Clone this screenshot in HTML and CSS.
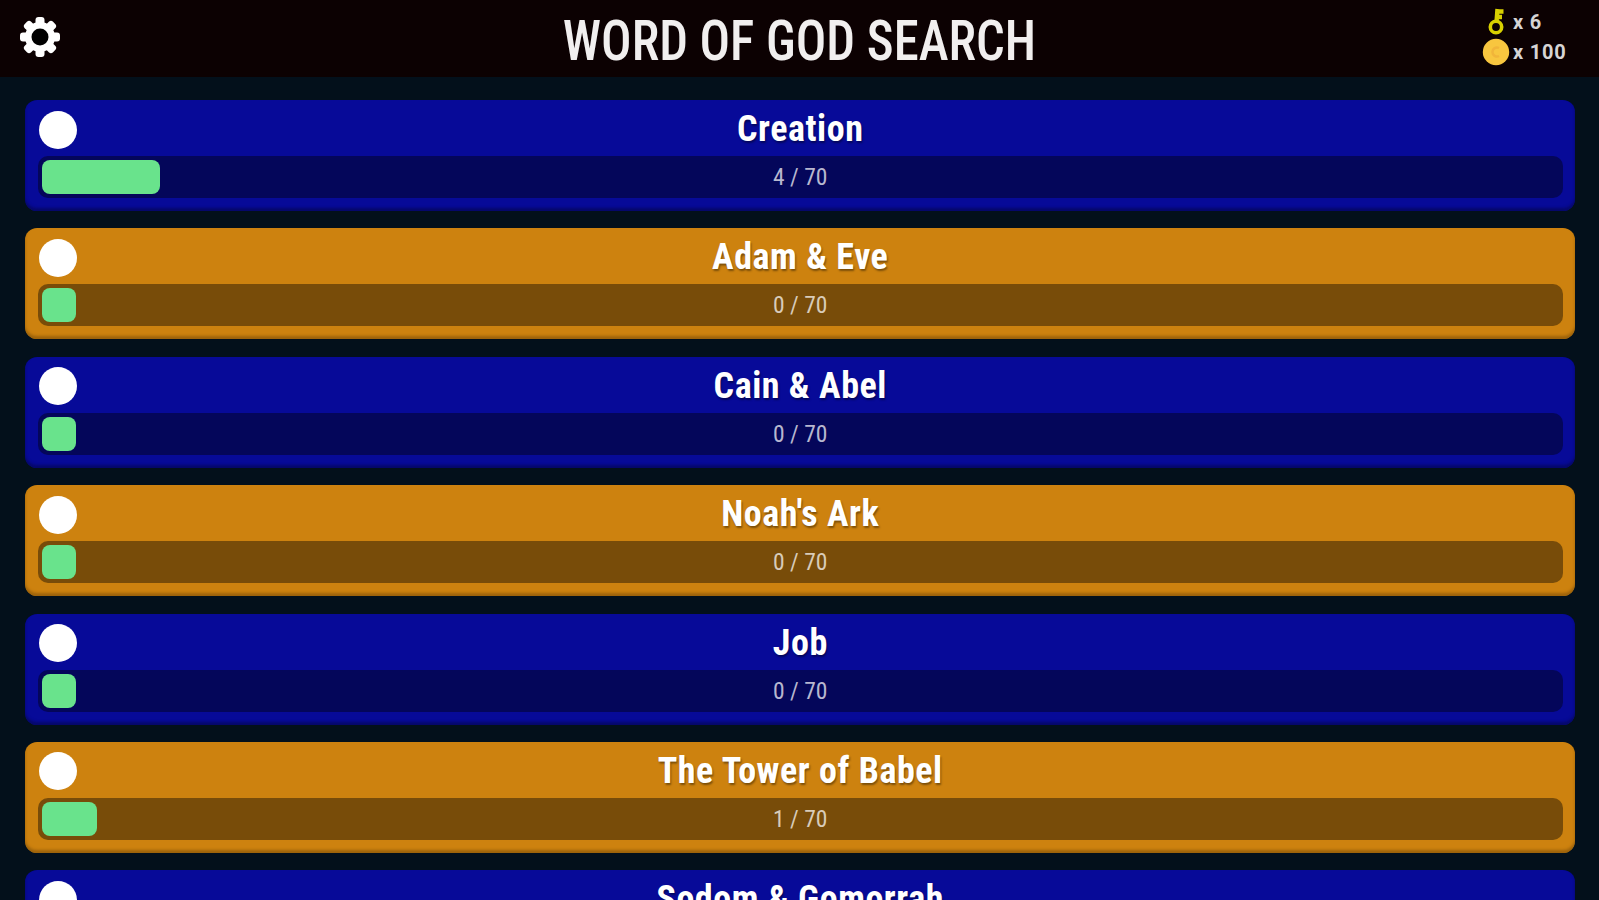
FILE: index.html
```html
<!DOCTYPE html>
<html lang="en">
<head>
    <meta charset="utf-8">
    <meta name="viewport" content="width=device-width, initial-scale=1.0">
    <title>Word of God Search</title>
    <link rel="stylesheet" href="styles.css">
</head>
<body>
    <header class="header">
        <svg class="gear" viewBox="-20 -20 40 40">
            <g fill="#fff">
                <rect x="-4.5" y="-20" width="9" height="40" rx="3"/>
                <rect x="-4.5" y="-20" width="9" height="40" rx="3" transform="rotate(45)"/>
                <rect x="-4.5" y="-20" width="9" height="40" rx="3" transform="rotate(90)"/>
                <rect x="-4.5" y="-20" width="9" height="40" rx="3" transform="rotate(135)"/>
                <circle r="15"/>
            </g>
            <circle r="8.5" fill="#000"/>
        </svg>
        <h1 class="title"><span>WORD OF GOD SEARCH</span></h1>
        <div class="wallet">
            <div class="wallet-row">
                <svg class="key" viewBox="0 0 18 28">
                    <circle cx="8" cy="19" r="5.7" fill="none" stroke="#d8d000" stroke-width="3.6"/>
                    <path d="M8.5 14L9.5 1M9.5 3.5h6M9 9h5" fill="none" stroke="#d8d000" stroke-width="4.4"/>
                </svg>
                <span class="amount">x 6</span>
            </div>
            <div class="wallet-row">
                <svg class="coin" viewBox="0 0 28 28">
                    <circle cx="14" cy="14" r="13.2" fill="#f8c63f"/>
                    <path d="M17 10a4.5 4.5 0 1 0 0 8" fill="none" stroke="#f1b53a" stroke-width="2.5"/>
                </svg>
                <span class="amount">x 100</span>
            </div>
        </div>
    </header>
    <main class="levels">
        <div class="level blue">
            <div class="level-top"><i class="dot"></i><h2>Creation</h2></div>
            <div class="track"><div class="fill" style="width: 118.5px"></div><span class="count">4 / 70</span></div>
        </div>
        <div class="level orange">
            <div class="level-top"><i class="dot"></i><h2>Adam &amp; Eve</h2></div>
            <div class="track"><div class="fill"></div><span class="count">0 / 70</span></div>
        </div>
        <div class="level blue">
            <div class="level-top"><i class="dot"></i><h2>Cain &amp; Abel</h2></div>
            <div class="track"><div class="fill"></div><span class="count">0 / 70</span></div>
        </div>
        <div class="level orange">
            <div class="level-top"><i class="dot"></i><h2>Noah's Ark</h2></div>
            <div class="track"><div class="fill"></div><span class="count">0 / 70</span></div>
        </div>
        <div class="level blue">
            <div class="level-top"><i class="dot"></i><h2>Job</h2></div>
            <div class="track"><div class="fill"></div><span class="count">0 / 70</span></div>
        </div>
        <div class="level orange">
            <div class="level-top"><i class="dot"></i><h2>The Tower of Babel</h2></div>
            <div class="track"><div class="fill" style="width: 55px"></div><span class="count">1 / 70</span></div>
        </div>
        <div class="level blue">
            <div class="level-top"><i class="dot"></i><h2>Sodom &amp; Gomorrah</h2></div>
        </div>
    </main>
</body>
</html>
```

FILE: styles.css
```css
* {
    box-sizing: border-box;
    margin: 0;
    padding: 0;
}

body {
    height: 100vh;
    overflow: hidden;
    background-color: #03101b;
    color: #fff;
    font-family: "Roboto Condensed", Roboto, sans-serif;
    font-stretch: 75%;
}

.header {
    display: grid;
    grid-template-columns: 140px 1fr 140px;
    height: 76.5px;
    background-color: #0c0102;
}

.gear {
    width: 40px;
    height: 40px;
    margin: 17px 0 0 20px;
}

.title {
    padding-top: 8px;
    font-size: 56px;
    font-weight: 500;
    line-height: 66px;
    text-align: center;
    white-space: nowrap;
    color: #f1efef;
}

.title span {
    display: inline-block;
    transform: scaleX(0.905);
}

.wallet {
    padding: 7px 0 0 23px;
}

.wallet-row {
    display: flex;
    align-items: center;
    height: 30px;
}

.key {
    width: 18px;
    height: 28px;
    margin: 0 7px 0 6px;
}

.coin {
    width: 28px;
    height: 28px;
    margin-right: 3px;
}

.amount {
    font-family: Roboto, sans-serif;
    font-size: 20px;
    font-weight: 700;
    font-stretch: 100%;
    letter-spacing: 0.8px;
    line-height: 28px;
    color: #d6d4d4;
    white-space: nowrap;
}

.levels {
    display: flex;
    flex-direction: column;
    gap: 17.4px;
    padding: 23.5px 24.5px 0 25px;
}

.level {
    flex: none;
    height: 111px;
    padding: 10px 12px 0 13px;
    border-radius: 12px;
}

.blue {
    background-color: #070a98;
    box-shadow: inset 0 -3px 3px #06086a;
}

.orange {
    background-color: #cd820f;
    box-shadow: inset 0 -3px 3px #9c620b;
}

.level-top {
    display: grid;
    grid-template-columns: 39px 1fr 39px;
    height: 46px;
}

.dot {
    width: 38px;
    height: 38px;
    margin: 0.5px 0 0 0.5px;
    border-radius: 50%;
    background-color: #fff;
}

.level h2 {
    font-size: 36px;
    font-weight: 700;
    letter-spacing: 0.55px;
    line-height: 38px;
    text-align: center;
    text-shadow: 1px 2px 2px rgba(0, 0, 0, 0.4);
}

.track {
    display: grid;
    align-items: center;
    height: 42px;
    border-radius: 10px;
}

.blue .track {
    background-color: #04065a;
}

.orange .track {
    background-color: #784c09;
}

.fill {
    grid-area: 1 / 1;
    width: 34px;
    height: 34px;
    margin-left: 3.5px;
    border-radius: 8px;
    background-color: #69e38c;
}

.count {
    grid-area: 1 / 1;
    justify-self: center;
    font-size: 23.5px;
    line-height: 42px;
    color: rgba(255, 255, 255, 0.72);
}
```
